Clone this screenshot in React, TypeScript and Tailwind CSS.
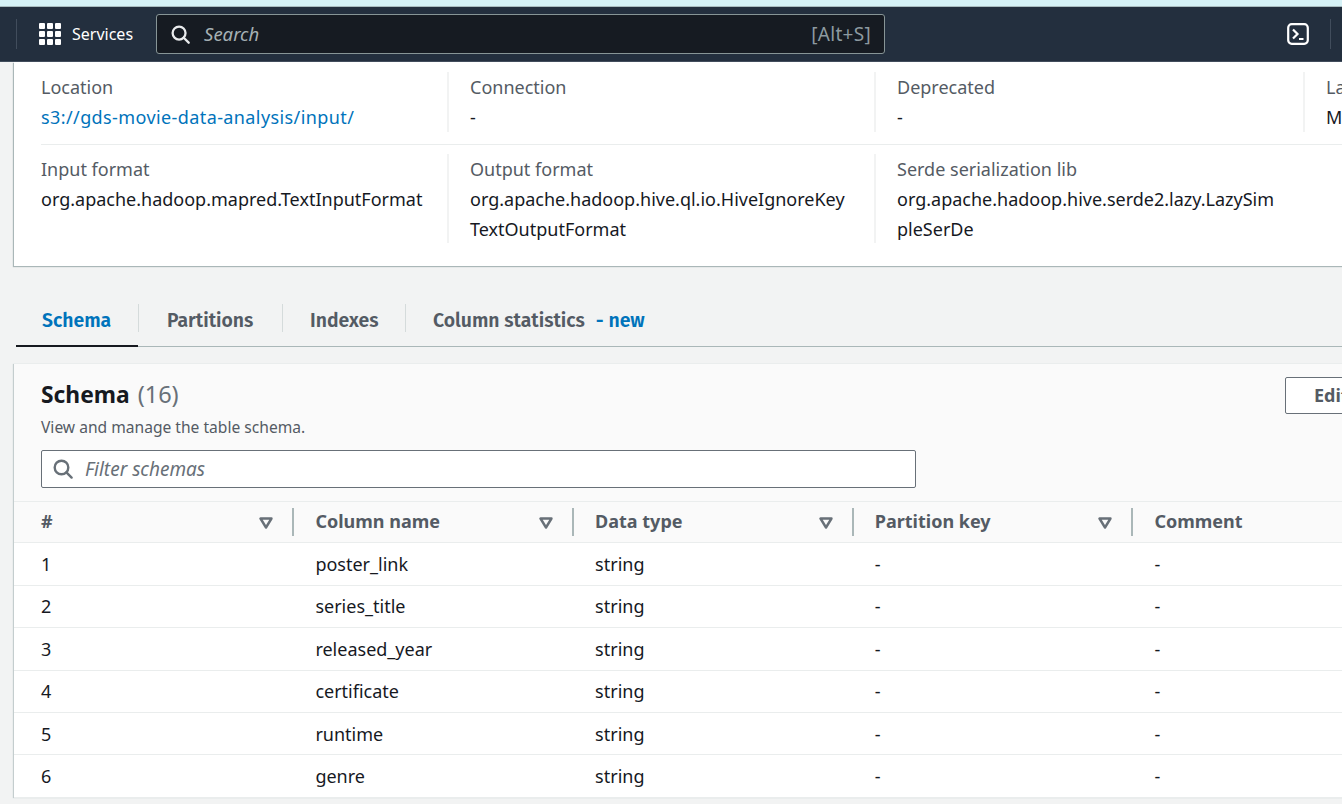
import React from "react";

function Tri() {
  return (
    <svg width="14" height="12" viewBox="0 0 14 12" className="shrink-0">
      <path d="M1.5 1.5h11L7 10.5z" fill="none" stroke="#687078" strokeWidth="2.4" strokeLinejoin="round" />
    </svg>
  );
}

function SearchIcon({ color, size = 20 }: { color: string; size?: number }) {
  return (
    <svg width={size} height={size} viewBox="0 0 20 20" fill="none" stroke={color} strokeWidth="2.4">
      <circle cx="8.5" cy="8.5" r="6.8" />
      <path d="M13.4 13.4l5.2 5.2" strokeLinecap="round" />
    </svg>
  );
}

function Cell({ label, children, divider = true, w }: { label: string; children: React.ReactNode; divider?: boolean; w: string }) {
  return (
    <div className={`${w} shrink-0 flex`}>
      <div className={`flex-1 pr-[22px] ${divider ? "border-r-2 border-[#f2f3f3]" : ""}`}>
        <div className="text-[#545b64]">{label}</div>
        <div className="text-[#16191f] break-all">{children}</div>
      </div>
      <div className="w-[21px] shrink-0" />
    </div>
  );
}

const rows = [
  ["1", "poster_link"],
  ["2", "series_title"],
  ["3", "released_year"],
  ["4", "certificate"],
  ["5", "runtime"],
  ["6", "genre"],
];

const cols = ["#", "Column name", "Data type", "Partition key", "Comment"];

export default function App() {
  return (
    <div className="w-[1342px] h-[804px] overflow-hidden bg-[#f2f3f3] font-['Noto_Sans',sans-serif] text-[18px] leading-[30px]">
      <div className="h-[6px] bg-[#d5f1f6]" />
      <div className="h-px bg-[#a9bcbf]" />
      <header className="h-[55px] bg-[#232f3e] border-b border-[#414d5c] flex items-center relative">
        <div className="w-px h-[30px] bg-[#414d5c] ml-[16px]" />
        <div className="ml-[22px] grid grid-cols-3 gap-[2px] w-[22px]">
          {Array.from({ length: 9 }).map((_, i) => (
            <span key={i} className="w-[6px] h-[6px] bg-white rounded-[1px]" />
          ))}
        </div>
        <span className="ml-[11px] text-white text-[16px] leading-[20px]">Services</span>
        <div className="ml-[23px] w-[729px] h-[40px] rounded-[3px] border border-[#879596] bg-[#161b22] flex items-center pl-[14px] pr-[13px]">
          <SearchIcon color="#e9ebed" size={19} />
          <span className="ml-[14px] italic text-[#a6b1b4] text-[18.5px]">Search</span>
          <span className="ml-auto text-[#8d9aa0] text-[19px] tracking-[0.3px]">[Alt+S]</span>
        </div>
        <svg width="22" height="22" viewBox="0 0 22 22" fill="none" stroke="#fff" className="ml-[402px]">
          <rect x="1.2" y="1.2" width="19.6" height="19.6" rx="3.5" strokeWidth="2.2" />
          <path d="M6 6.5l4.5 4.5L6 15.5" strokeWidth="2.2" />
          <path d="M12 16h4.5" strokeWidth="2" />
        </svg>
        <div className="w-px h-[30px] bg-[#414d5c] ml-[21px]" />
      </header>

      <div className="ml-[14px] h-[204px] bg-white shadow-[-1px_1px_1px_#aab7b8] w-[1340px] pl-[27px] overflow-hidden">
        <div className="flex w-[1400px] pt-[10px] h-[83px] border-b border-[#eaeded]">
          <div className="flex h-[60px]">
            <Cell label="Location" w="w-[429px]"><span className="text-[#0073bb] tracking-[0.4px]">s3://gds-movie-data-analysis/input/</span></Cell>
            <Cell label="Connection" w="w-[427px]">-</Cell>
            <Cell label="Deprecated" w="w-[429px]">-</Cell>
            <div>
              <div className="text-[#545b64]">Last</div>
              <div className="text-[#16191f]">M</div>
            </div>
          </div>
        </div>
        <div className="flex w-[1400px] pt-[9px]">
          <div className="flex h-[89px]">
            <Cell label="Input format" w="w-[429px]">org.apache.hadoop.mapred.TextInputFormat</Cell>
            <Cell label="Output format" w="w-[427px]">org.apache.hadoop.hive.ql.io.HiveIgnoreKeyTextOutputFormat</Cell>
            <Cell label="Serde serialization lib" w="w-[429px]" divider={false}>org.apache.hadoop.hive.serde2.lazy.LazySimpleSerDe</Cell>
          </div>
        </div>
      </div>

      <nav className="ml-[16px] mt-[38px] h-[43px] border-b border-[#aab7b8] flex items-start font-['Fira_Sans','Noto_Sans',sans-serif] font-semibold text-[#545b64] text-[19.4px]">
        <div className="w-[122px] h-[43px] border-b-2 border-[#16191f] pl-[26px] pt-[3px] text-[#0073bb] leading-[28px]">Schema</div>
        <div className="w-px h-[28px] bg-[#d5dbdb]" />
        <div className="pl-[28px] w-[143px] pt-[3px] leading-[28px]">Partitions</div>
        <div className="w-px h-[28px] bg-[#d5dbdb]" />
        <div className="pl-[27px] w-[122px] pt-[3px] leading-[28px]">Indexes</div>
        <div className="w-px h-[28px] bg-[#d5dbdb]" />
        <div className="pl-[27px] pt-[3px] leading-[28px]">Column statistics<span className="text-[#0073bb] ml-[11px]">- new</span></div>
      </nav>

      <section className="ml-[14px] mt-[17px] w-[1340px] bg-white shadow-[-1px_0_1px_#c4cdce]">
        <div className="bg-[#fafafa] h-[137px] pl-[27px] relative">
          <div className="pt-[14px] flex items-baseline leading-[32px]">
            <span className="text-[#16191f] text-[22.8px] font-bold">Schema</span>
            <span className="ml-[8px] text-[#687078] text-[23.5px]">(16)</span>
          </div>
          <div className="text-[#545b64] text-[15.6px] leading-[20px] mt-[6px]">View and manage the table schema.</div>
          <div className="mt-[13px] w-[875px] h-[38px] bg-white border border-[#687078] rounded-[2px] flex items-center pl-[11px]">
            <SearchIcon color="#687078" size={20} />
            <span className="ml-[12px] italic text-[#687078] text-[19px]">Filter schemas</span>
          </div>
          <div className="absolute left-[1271px] top-[13px] w-[100px] h-[37px] bg-white border border-[#687078] rounded-[2px] pl-[28px] font-bold text-[#545b64] leading-[35px]">Edit</div>
        </div>
        <div className="h-[42.4px] bg-[#fafafa] border-t border-b border-[#eaeded] flex items-center pl-[27px]">
          {cols.map((c, i) => (
            <div key={c} className={`${i === 0 ? "w-[274.4px]" : "w-[279.7px]"} shrink-0 flex items-center h-[28px] font-bold text-[#545b64] relative`}>
              <span className="pb-[2px]">{c}</span>
              {i < 4 && (
                <>
                  <span className="absolute right-[42px] top-[9px]"><Tri /></span>
                  <span className="absolute right-[21px] top-0 w-[2px] h-[28px] bg-[#aab7b8]" />
                </>
              )}
            </div>
          ))}
        </div>
        {rows.map(([n, name]) => (
          <div key={n} className="h-[42.4px] border-b border-[#eaeded] flex items-center pl-[27px] text-[#16191f]">
            <div className="w-[274.4px] shrink-0">{n}</div>
            <div className="w-[279.7px] shrink-0">{name}</div>
            <div className="w-[279.7px] shrink-0">string</div>
            <div className="w-[279.7px] shrink-0">-</div>
            <div>-</div>
          </div>
        ))}
      </section>
    </div>
  );
}
